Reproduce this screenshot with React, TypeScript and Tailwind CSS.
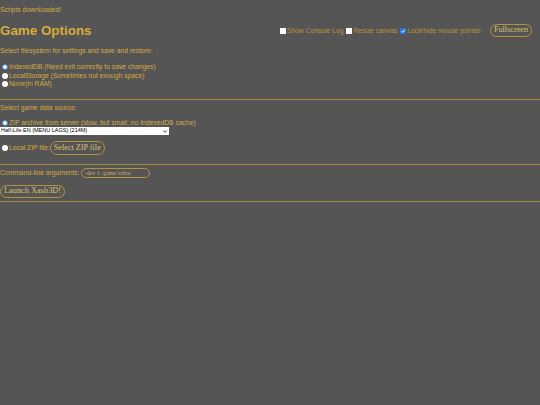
function Radio({ checked }: { checked?: boolean }) {
    return (
        <span
            className={`inline-block shrink-0 w-[6px] h-[6px] ml-[2px] mr-[1px] rounded-full ${
                checked ? 'bg-white border-[1.5px] border-[#2f7fe8]' : 'bg-white'
            }`}
        />
    );
}

function Checkbox({ checked }: { checked?: boolean }) {
    if (checked) {
        return (
            <svg viewBox="0 0 6 6" className="shrink-0 w-[6px] h-[6px] mr-[1px]">
                <rect width="6" height="6" rx="0.5" fill="#2a76dc" />
                <path d="M1.2 3.2 L2.5 4.4 L4.8 1.6" stroke="#fff" strokeWidth="1" fill="none" />
            </svg>
        );
    }
    return <span className="inline-block shrink-0 w-[6px] h-[6px] mr-[1px] bg-white" />;
}

export default function App() {
    return (
        <div className="min-h-[405px] bg-[#555555] text-[#d4aa40] font-['Liberation_Sans',Arial,sans-serif] text-[6.75px] leading-[8px]">
            <div className="pt-[6px] h-[21px]">Scripts downloaded!</div>

            {/* Header */}
            <div className="flex items-center justify-between h-[19px] pr-[8px]">
                <h1 className="text-[13.4px] leading-[16px] font-bold text-[#d8ab3c]">Game Options</h1>
                <div className="flex items-center text-[#b8923a]">
                    <label className="flex items-center mr-[3px]">
                        <Checkbox />
                        Show Console Log
                    </label>
                    <label className="flex items-center mr-[3px]">
                        <Checkbox />
                        Resize canvas
                    </label>
                    <label className="flex items-center mr-[9px]">
                        <Checkbox checked />
                        Lock/hide mouse pointer
                    </label>
                    <button className="h-[13px] px-[3px] rounded-[7px] border border-[#b8923a] font-['Liberation_Serif',serif] text-[8.2px] leading-none text-[#dcc070]">
                        Fullscreen
                    </button>
                </div>
            </div>

            <div className="pt-[7px] h-[23px]">Select filesystem for settings and save and restore:</div>
            <div className="h-[36px]">
                <label className="flex items-center h-[8.5px]">
                    <Radio checked />
                    IndexedDB (Need exit correctly to save changes)
                </label>
                <label className="flex items-center h-[8.5px]">
                    <Radio />
                    LocalStorage (Sometimes not enough space)
                </label>
                <label className="flex items-center h-[8.5px]">
                    <Radio />
                    None(in RAM)
                </label>
            </div>
            <hr className="border-[#a8893f]" />

            <div className="pt-[4px] h-[19px]">Select game data source:</div>
            <label className="flex items-center h-[8px]">
                <Radio checked />
                ZIP archive from server (slow, but small, no IndexedDB cache)
            </label>
            <div className="relative w-[169px] h-[8px]">
                <select className="block appearance-none w-full h-full pl-[1px] bg-white text-black text-[5.5px] leading-none">
                    <option>Half-Life EN (MENU LAGS) (214M)</option>
                </select>
                <svg viewBox="0 0 6 4" className="absolute right-[2px] top-[2.5px] w-[4px] h-[3px]">
                    <path d="M0.5 0.8 L3 3.2 L5.5 0.8" stroke="#000" strokeWidth="1.2" fill="none" />
                </svg>
            </div>
            <div className="flex items-center h-[14px] mt-[6px]">
                <Radio />
                <span>Local ZIP file:</span>
                <button className="h-[14px] px-[3px] rounded-[7px] border border-[#b8923a] font-['Liberation_Serif',serif] text-[8.2px] leading-none text-[#dcc070]">
                    Select ZIP file
                </button>
            </div>
            <hr className="border-[#a8893f] mt-[9px]" />

            <div className="flex items-center h-[15px]">
                <span className="mr-[1px]">Command-line arguments:</span>
                <div className="w-[69px] h-[10px] pl-[3px] rounded-[5px] border border-[#b8923a] font-['Liberation_Serif',serif] text-[6px] leading-[8px] text-[#c9ad6a]">
                    -dev 1 -game valve
                </div>
            </div>
            <div className="pt-[5px] h-[21px]">
                <button className="h-[13px] px-[3px] rounded-[7px] border border-[#b8923a] font-['Liberation_Serif',serif] text-[8.33px] leading-none text-[#dcc070]">
                    Launch Xash3D!
                </button>
            </div>
            <hr className="border-[#a8893f]" />
        </div>
    );
}
